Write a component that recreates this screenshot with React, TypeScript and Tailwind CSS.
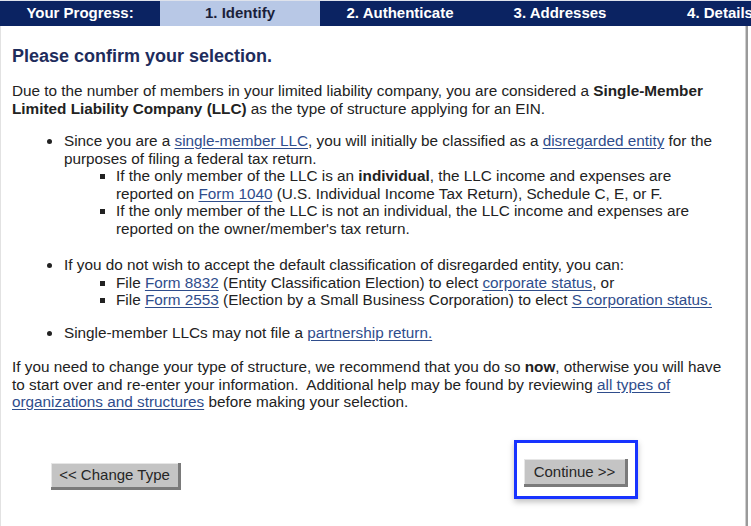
import React from "react";

const A = ({ children }: { children: React.ReactNode }) => (
  <a href="#" className="text-[#2f4d8c] underline decoration-[#2f4d8c] underline-offset-[2px]">
    {children}
  </a>
);

export default function App() {
  const tabs = [
    { label: "Your Progress:", active: false },
    { label: "1. Identify", active: true },
    { label: "2. Authenticate", active: false },
    { label: "3. Addresses", active: false },
    { label: "4. Details", active: false },
  ];
  return (
    <div
      className="w-[751px] h-[526px] overflow-hidden bg-white text-[15.3px] text-[#222]"
      style={{ fontFamily: '"Liberation Sans", Arial, sans-serif' }}
    >
      <div className="flex h-[26px] bg-[#0b2362] border-t border-[#dfe3ec] w-[800px]">
        {tabs.map((t) => (
          <div
            key={t.label}
            className={
              "w-[160px] shrink-0 flex items-center justify-center font-bold text-[15px] " +
              (t.active ? "bg-[#b8c8e6] text-[#1b1f3a]" : "text-white")
            }
          >
            {t.label}
          </div>
        ))}
      </div>
      <div className="flex h-[500px]">
        <div className="w-[745px] border-l border-[#e2e2e2] pl-[11px] pr-[19px]">
          <h1 className="mt-[19px] text-[18px] font-bold text-[#1e2c5c] leading-[22px]">
            Please confirm your selection.
          </h1>
          <p className="mt-[15px] leading-[17.5px]">
            Due to the number of members in your limited liability company, you are considered a{" "}
            <b>Single-Member Limited Liability Company (LLC)</b> as the type of structure applying for an EIN.
          </p>
          <ul className="mt-[15px] list-disc pl-[51px] leading-[17.5px]">
            <li className="pl-[1px]">
              Since you are a <A>single-member LLC</A>, you will initially be classified as a{" "}
              <A>disregarded entity</A> for the purposes of filing a federal tax return.
              <ul className="list-[square] pl-[52px] mb-[19px]">
                <li>
                  If the only member of the LLC is an <b>individual</b>, the LLC income and expenses are reported on{" "}
                  <A>Form 1040</A> (U.S. Individual Income Tax Return), Schedule C, E, or F.
                </li>
                <li>
                  If the only member of the LLC is not an individual, the LLC income and expenses are reported on the
                  owner/member's tax return.
                </li>
              </ul>
            </li>
            <li className="pl-[1px]">
              If you do not wish to accept the default classification of disregarded entity, you can:
              <ul className="list-[square] pl-[52px] mb-[15px]">
                <li>
                  File <A>Form 8832</A> (Entity Classification Election) to elect <A>corporate status</A>, or
                </li>
                <li>
                  File <A>Form 2553</A> (Election by a Small Business Corporation) to elect{" "}
                  <A>S corporation status.</A>
                </li>
              </ul>
            </li>
            <li className="pl-[1px]">
              Single-member LLCs may not file a <A>partnership return.</A>
            </li>
          </ul>
          <p className="mt-[17px] leading-[17.5px]">
            If you need to change your type of structure, we recommend that you do so <b>now</b>, otherwise you will have
            to start over and re-enter your information.&nbsp; Additional help may be found by reviewing{" "}
            <A>all types of organizations and structures</A> before making your selection.
          </p>
          <div className="flex items-start mt-[29px]">
            <button className="ml-[39px] mt-[23px] w-[130px] h-[27px] shrink-0 bg-[#c4c4c4] text-[#262626] text-[15px] leading-none border-r-[3px] border-b-[3px] border-[#7a7a7a] shadow-[inset_1px_1px_0_#e6e6e6]">
              &lt;&lt; Change Type
            </button>
            <div className="ml-[333px] w-[124px] h-[59px] shrink-0 border-[3px] border-[#1733ff] bg-white shadow-[0_3px_6px_rgba(0,0,0,0.25)] pt-[16px] pl-[7px]">
              <button className="w-[104px] h-[28px] bg-[#c4c4c4] text-[#262626] text-[15px] leading-none border-r-[3px] border-b-[3px] border-[#7a7a7a] shadow-[inset_1px_1px_0_#e6e6e6]">
                Continue &gt;&gt;
              </button>
            </div>
          </div>
        </div>
        <div className="w-[3px] bg-[#9a9a9a] border-l border-[#cfcfcf]" />
        <div className="w-[3px] bg-white" />
      </div>
    </div>
  );
}
